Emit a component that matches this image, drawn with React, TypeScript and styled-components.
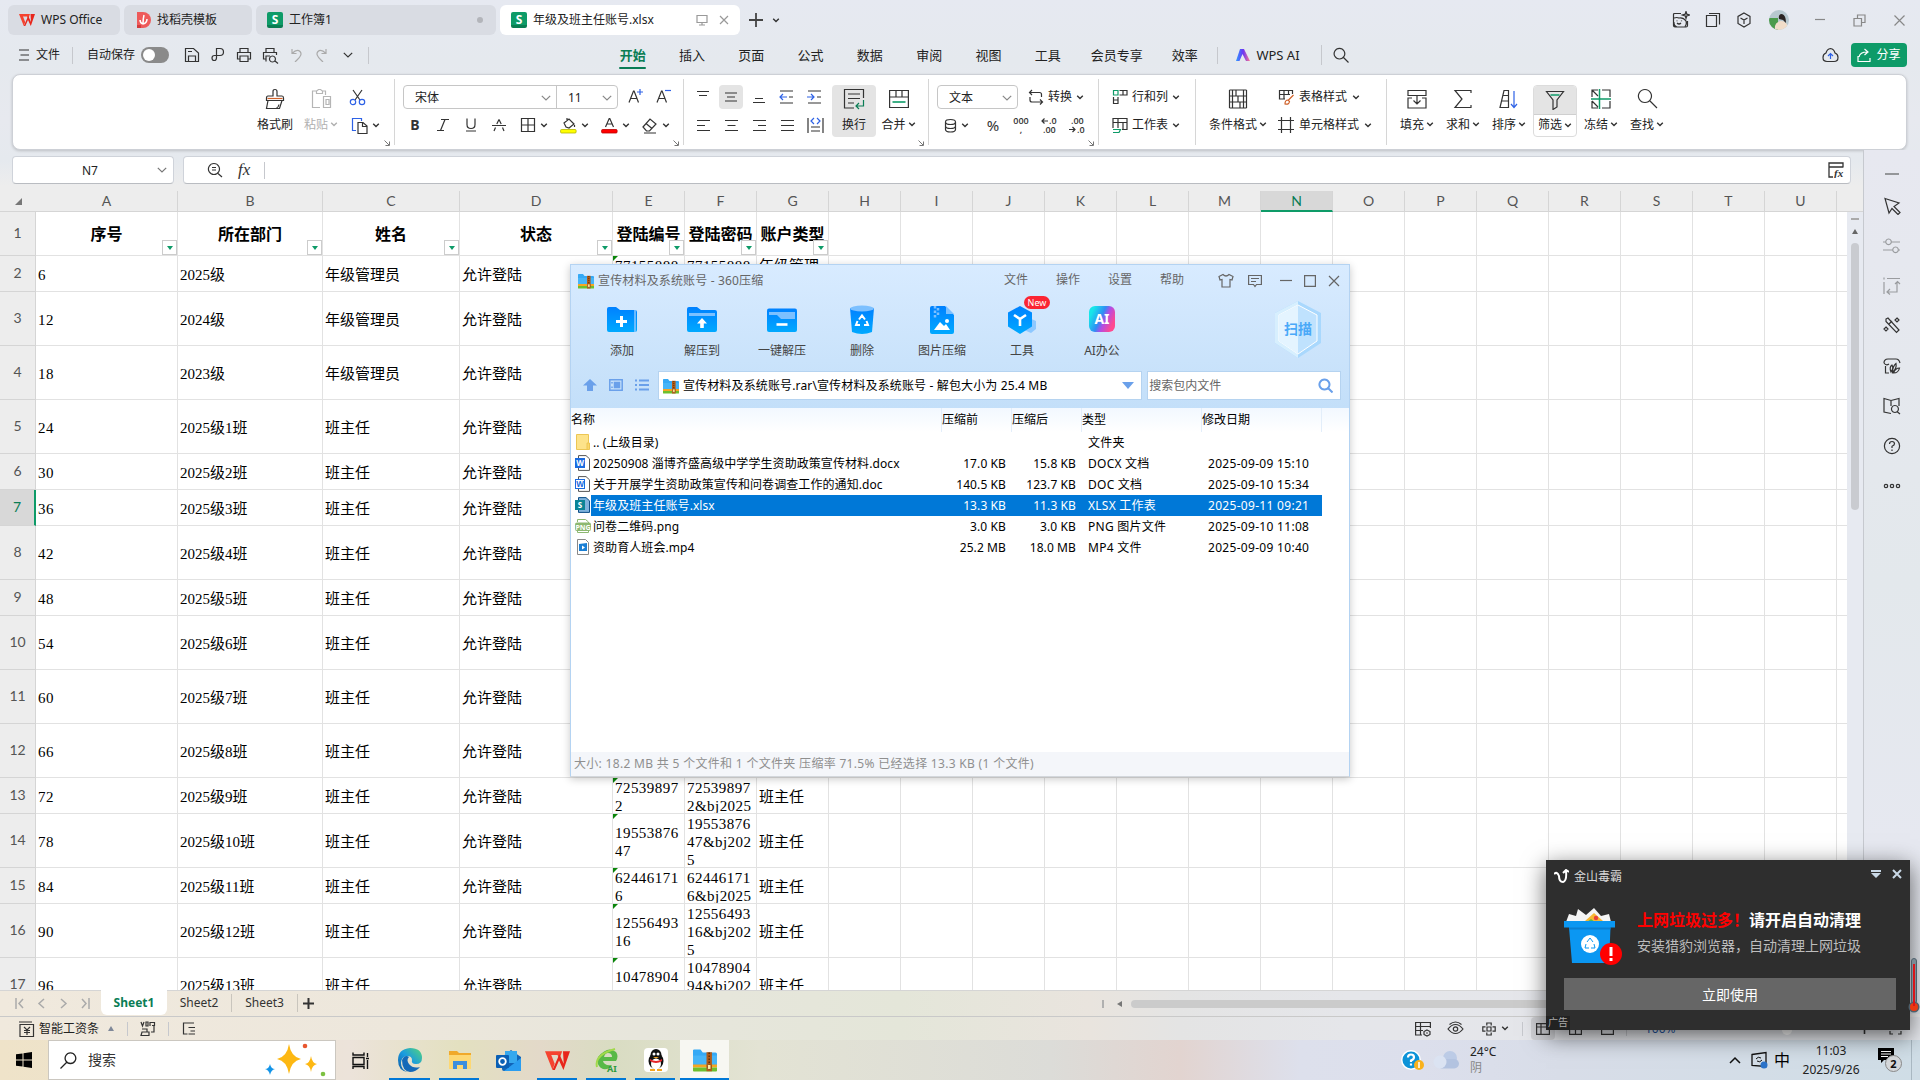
import React from "react";
import styled, { createGlobalStyle, css } from "styled-components";

const ui = `"Noto Sans", "Noto Sans CJK SC", sans-serif`;
const green = "#0e9b68";
const darkGreen = "#0a7d55";
const blue = "#2e62e6";

const Global = createGlobalStyle`
  * { box-sizing: border-box; }
  body { margin: 0; overflow: hidden; background: #e6e8ef; }
`;

const Screen = styled.div`
  position: relative;
  width: 1920px;
  height: 1080px;
  display: flex;
  flex-direction: column;
  overflow: hidden;
  font: 12px/16px ${ui};
  color: #222;
  background: linear-gradient(180deg, #e6e9f1 0, #e5e9ee 60px, #e7e9ef 120px, #e5e9ee 160px, #ededed 186px, #ededed 100%);
  svg { display: block; flex: none; }
`;

const Svg = styled.svg<{ $c?: string; $sw?: number }>`
  fill: none;
  stroke: ${(p) => p.$c || "#333"};
  stroke-width: ${(p) => p.$sw || 1.2};
`;

type GProps = { w?: number; h?: number; box?: string; c?: string; sw?: number; d?: string; children?: React.ReactNode };
const G = ({ w = 18, h, box, c, sw, d, children }: GProps) => (
  <Svg width={w} height={h || w} viewBox={box || `0 0 ${w} ${h || w}`} $c={c} $sw={sw}>
    {d && <path d={d} />}
    {children}
  </Svg>
);
const Chev = ({ c = "#333", big }: { c?: string; big?: boolean }) =>
  big ? <G w={10} h={6} c={c} sw={1.2} d="M.8 .8 5 5 9.2 .8" /> : <G w={8} h={5} c={c} sw={1.4} d="M1.2 .8 4 3.6 6.8 .8" />;

/* ---------- title bar ---------- */
const TitleBar = styled.div`
  height: 36px;
  display: flex;
  align-items: center;
  padding: 4px 0 0 8px;
  gap: 4px;
  flex: none;
`;
const Tab = styled.div<{ $w: number; $on?: boolean }>`
  width: ${(p) => p.$w}px;
  height: 30px;
  border-radius: 6px;
  background: ${(p) => (p.$on ? "#fff" : "#d9dce3")};
  display: flex;
  align-items: center;
  padding: 0 6px 0 11px;
  gap: 6px;
  color: #222;
  white-space: nowrap;
`;
const Grow = styled.div`flex: 1;`;
const Dot = styled.div`width: 6px; height: 6px; border-radius: 50%; background: #b3b5ba; margin-right: 7px;`;
const SBadge = styled.div`
  width: 16px;
  height: 16px;
  border-radius: 2px;
  background: linear-gradient(${green} 80%, #0a7d52 80%);
  color: #fff;
  font: bold 12px/15px ${ui};
  text-align: center;
`;
const NewTab = styled.div`display: flex; align-items: center; gap: 9px; margin-left: 5px;`;
const WindowTools = styled.div`
  display: flex;
  align-items: center;
`;
const ToolSlot = styled.div<{ $w: number }>`
  width: ${(p) => p.$w}px;
  display: flex;
  justify-content: center;
`;

const WLogo = ({ w = 16 }: { w?: number }) => (
  <svg width={w} height={w} viewBox="0 0 16 16">
    <path d="M0 2h11L9.200 7 8 4.500H4L6.200 10 4.800 14Z" fill="#f5432f" />
    <path d="M11.500 2H16l-4.200 12L9 8 6.300 14H4.800L9.200 4l2.800 6Z" fill="#e8261c" />
  </svg>
);

/* ---------- menu row ---------- */
const MenuRow = styled.div`
  height: 38px;
  flex: none;
  display: flex;
  align-items: center;
  padding: 0 13px 0 19px;
`;
const QuickBar = styled.div`
  width: 584px;
  display: flex;
  align-items: center;
`;
const Label = styled.span<{ $ml?: number; $c?: string; $ls?: number }>`
  margin-left: ${(p) => p.$ml || 0}px;
  color: ${(p) => p.$c || "#222"};
  letter-spacing: ${(p) => p.$ls || 0}px;
  white-space: nowrap;
`;
const VLine = styled.div<{ $l: number; $r: number; $h?: number; $c?: string }>`
  width: 1px;
  height: ${(p) => p.$h || 17}px;
  margin: 0 ${(p) => p.$r}px 0 ${(p) => p.$l}px;
  background: ${(p) => p.$c || "#c6c8cd"};
`;
const Toggle = styled.div`
  width: 28px;
  height: 16px;
  border-radius: 8px;
  margin: 0 10px 0 6px;
  background: #8a8a8a;
  padding: 2px;
  &::after { content: ""; display: block; width: 12px; height: 12px; border-radius: 50%; background: #fff; }
`;
const MenuTab = styled.div<{ $w?: number; $on?: boolean }>`
  width: ${(p) => p.$w || 59.3}px;
  height: 28px;
  display: flex;
  flex-direction: column;
  align-items: center;
  font-size: 13px;
  line-height: 25px;
  padding-top: 2px;
  color: #222;
  ${(p) => p.$on && css`color: ${darkGreen}; font-weight: bold;
    &::after { content: ""; width: 27px; height: 2px; border-radius: 1px; background: ${darkGreen}; flex: none; margin-top: -1px; }`}
`;
const MenuText = styled.span`font-size: 13px; color: #222;`;
const Share = styled.div`
  width: 56px;
  height: 24px;
  margin-left: 12px;
  border-radius: 4px;
  background: ${green};
  color: #fff;
  display: flex;
  align-items: center;
  justify-content: center;
  gap: 4px;
`;

/* ---------- ribbon ---------- */
const Ribbon = styled.div`
  margin: 0 13px 0 12px;
  height: 76px;
  flex: none;
  display: flex;
  background: #fff;
  border: 1px solid #cdd0d6;
  border-radius: 8px;
  box-shadow: 0 1px 3px rgba(0, 0, 0, 0.18);
`;
const Group = styled.div<{ $w: number; $pl: number }>`
  position: relative;
  width: ${(p) => p.$w}px;
  padding: 10px 0 0 ${(p) => p.$pl}px;
  display: flex;
  flex: none;
  &::after { content: ""; position: absolute; right: 0; top: 4px; width: 1px; height: 66px; background: #d6d6d6; }
  &:last-child::after { display: none; }
`;
const Launcher = styled.div`
  position: absolute;
  right: 5px;
  bottom: 3px;
`;
const Launch = () => (
  <Launcher><G w={6} c="#777" sw={1} d="M.5 .5 5 5M5.500 1.500v4h-4" /></Launcher>
);
const Rows = styled.div<{ $ml?: number }>`
  display: flex;
  flex-direction: column;
  gap: 4px;
  margin-left: ${(p) => p.$ml || 0}px;
`;
const Row = styled.div`
  height: 24px;
  display: flex;
  align-items: center;
`;
const Cell28 = styled.div<{ $on?: boolean; $ml?: number }>`
  width: 28px;
  height: 24px;
  margin-left: ${(p) => p.$ml || 0}px;
  display: flex;
  align-items: center;
  justify-content: center;
  ${(p) => p.$on && css`background: #e4e4e4; border-radius: 4px; width: 24px; margin: 0 2px;`}
`;
const Split = styled.div<{ $w?: number; $pl?: number; $gap?: number }>`
  width: ${(p) => p.$w || 40.3}px;
  padding-left: ${(p) => (p.$pl === undefined ? 7 : p.$pl)}px;
  display: flex;
  align-items: center;
  gap: ${(p) => p.$gap || 4}px;
`;
const Tall = styled.div<{ $w?: number; $on?: boolean; $dim?: boolean }>`
  width: ${(p) => p.$w || 46}px;
  height: 52px;
  display: flex;
  flex-direction: column;
  align-items: center;
  border-radius: 4px;
  flex: none;
  color: ${(p) => (p.$dim ? "#b0b0b0" : "#222")};
  background: ${(p) => (p.$on ? "#e4e4e4" : "transparent")};
`;
const TallIcon = styled.div`height: 27px; display: flex; align-items: center;`;
const TallText = styled.div`
  height: 25px;
  display: flex;
  align-items: center;
  gap: 2px;
  white-space: nowrap;
`;
const FilterFrame = styled.div`
  width: 44px;
  height: 52px;
  margin: 0 1px;
  flex: none;
  border: 1px solid #dcdcdc;
  border-radius: 4px;
  display: flex;
  flex-direction: column;
  align-items: center;
  overflow: hidden;
`;
const FilterTop = styled.div`
  width: 100%;
  height: 29px;
  flex: none;
  background: #e4e4e4;
  border-bottom: 1px solid #cfcfcf;
  display: flex;
  align-items: center;
  justify-content: center;
`;
const FilterText = styled(TallText)`height: 20px;`;
const Combo = styled.div<{ $w: number; $ml?: number }>`
  width: ${(p) => p.$w}px;
  height: 24px;
  margin-left: ${(p) => p.$ml || 0}px;
  border: 1px solid #c6c6c6;
  border-radius: 4px;
  display: flex;
  align-items: center;
`;
const ComboPart = styled.div<{ $w: number; $line?: boolean }>`
  width: ${(p) => p.$w}px;
  height: 22px;
  padding: 1px 5px 0 11px;
  display: flex;
  align-items: center;
  justify-content: space-between;
  border-left: ${(p) => (p.$line ? "1px solid #c6c6c6" : "0")};
`;
const Bold = styled.span`font: bold 14px/20px ${ui}; color: #333;`;
const Big = styled.span`font: 15px/20px ${ui}; color: #333;`;
const Stack = styled.div`
  font: 600 9px/9px "Open Sans", sans-serif;
  color: #333;
  text-align: center;
  white-space: pre;
`;

/* ---------- formula bar ---------- */
const FormulaRow = styled.div`
  height: 41px;
  flex: none;
  display: flex;
  gap: 9px;
  padding: 6px 0 7px 12px;
`;
const FieldBox = styled.div<{ $w: number }>`
  width: ${(p) => p.$w}px;
  height: 28px;
  background: #fff;
  border: 1px solid #cfd3da;
  border-bottom-color: #b9bcc1;
  border-radius: 4px;
  display: flex;
  align-items: center;
`;
const NameText = styled.div`flex: 1; padding: 1px 0 0 16px; text-align: center; font-size: 12px;`;
const Fx = styled.span`font: italic 17px/20px "Liberation Serif", serif; color: #333; margin-left: 15px;`;

/* ---------- sheet ---------- */
const Body = styled.div`
  height: 825px;
  flex: none;
  display: flex;
`;
const SheetArea = styled.div`
  width: 1863px;
  height: 799px;
  display: flex;
  flex-direction: column;
  overflow: hidden;
`;
const Heads = styled.div`
  height: 21px;
  flex: none;
  display: flex;
  border-bottom: 1px solid #d5d5d5;
  background: #ededed;
`;
const Corner = styled.div`width: 36px; display: flex; align-items: center; padding-left: 15px;`;
const Head = styled.div<{ $w: number; $on?: boolean }>`
  width: ${(p) => p.$w}px;
  height: 21px;
  flex: none;
  text-align: center;
  font: 14px/20px Lato, ${ui};
  color: ${(p) => (p.$on ? darkGreen : "#555")};
  background: ${(p) => (p.$on ? "#d8d8d8" : "transparent")};
  border-right: 1px solid #d5d5d5;
  border-bottom: ${(p) => (p.$on ? `2px solid ${green}` : "0")};
`;
const GridWrap = styled.div`display: flex; height: 778px;`;
const GridRows = styled.div`width: 1847px; height: 778px; overflow: hidden; background: #fff;`;
const GridRow = styled.div<{ $h: number }>`height: ${(p) => p.$h}px; display: flex;`;
const RowNo = styled.div<{ $on?: boolean }>`
  width: 36px;
  flex: none;
  display: flex;
  align-items: center;
  justify-content: center;
  padding-bottom: 2px;
  font: 14px/18px Lato, ${ui};
  color: ${(p) => (p.$on ? darkGreen : "#555")};
  background: ${(p) => (p.$on ? "#d8d8d8" : "#ededed")};
  border-bottom: 1px solid #d5d5d5;
  border-right: ${(p) => (p.$on ? `2px solid ${green}` : "1px solid #d5d5d5")};
`;
const Cell = styled.div<{ $w: number; $head?: boolean; $wide?: boolean; $last?: boolean }>`
  position: relative;
  width: ${(p) => p.$w}px;
  flex: none;
  border-right: ${(p) => (p.$last ? 0 : 1)}px solid #e2e2e2;
  border-bottom: 1px solid #e2e2e2;
  display: flex;
  align-items: center;
  justify-content: ${(p) => (p.$head ? "center" : "flex-start")};
  padding: 3px 0 0 ${(p) => (p.$head ? 0 : 2)}px;
  font-family: "Liberation Serif", "Noto Sans CJK SC", serif;
  font-size: ${(p) => (p.$head ? 16 : 15)}px;
  font-weight: ${(p) => (p.$head ? "bold" : "normal")};
  line-height: 18px;
  letter-spacing: ${(p) => (p.$wide ? 0.45 : 0)}px;
  color: #000;
  white-space: pre;
  overflow: hidden;
`;
const FilterBtn = styled.div`
  position: absolute;
  right: 0;
  bottom: 0;
  width: 15px;
  height: 15px;
  background: #fff;
  border: 1px solid #ccc;
  display: flex;
  align-items: center;
  justify-content: center;
`;
const Flag = styled.i`
  position: absolute;
  left: 0;
  top: 0;
  border-top: 5px solid #0a850a;
  border-right: 5px solid transparent;
`;
const VScroll = styled.div`
  width: 16px;
  background: #e7eaf1;
  display: flex;
  flex-direction: column;
  align-items: center;
  padding-top: 6px;
`;
const Dash = styled.div`width: 8px; height: 2px; background: #aaa;`;
const Tri = styled.i<{ $dir: "up" | "down" | "left"; $c: string; $s?: number }>`
  width: 0;
  height: 0;
  border: ${(p) => p.$s || 3}px solid transparent;
  ${(p) => p.$dir === "up" && css`border-bottom: ${(p.$s || 3) + 2}px solid ${p.$c}; border-top: 0;`}
  ${(p) => p.$dir === "down" && css`border-top: ${(p.$s || 3) + 1}px solid ${p.$c}; border-bottom: 0;`}
  ${(p) => p.$dir === "left" && css`border-right: ${(p.$s || 3) + 2}px solid ${p.$c}; border-left: 0;`}
`;
const ScrollUp = styled.div`margin: 9px 0 9px;`;
const VThumb = styled.div`width: 8px; height: 267px; border-radius: 4px; background: #c9cbd0;`;
const Side = styled.div`
  width: 57px;
  height: 864px;
  margin-top: -41px;
  border-left: 1px solid #c6c9cf;
  background: linear-gradient(#e7e8f0, #e3e8ec 50%, #e6e8f0 80%, #e3e7ec);
  display: flex;
  flex-direction: column;
  align-items: center;
  padding-top: 23px;
`;
const SideItem = styled.div`height: 40px; display: flex; align-items: center;`;
const SideMin = styled.div`width: 14px; height: 2px; background: #949699; margin-bottom: 11px;`;

/* ---------- bottom bars ---------- */
const warm = "linear-gradient(90deg, #f0e9dd 0, #ede7dc 400px, #e7e6dc 640px, #e4e6d9 900px, #e9e4de 1090px, #e4e4e4 1180px, #e5e6ea 1350px, #e4e6eb 1920px)";
const SheetBar = styled.div`
  height: 27px;
  flex: none;
  margin-top: -26px;
  width: 1863px;
  position: relative;
  background: ${warm};
  border-top: 1px solid #d5d5d5;
  border-bottom: 1px solid #c9c9c9;
  display: flex;
  align-items: center;
`;
const NavIcons = styled.div`width: 101px; padding-left: 15px; display: flex; gap: 13px;`;
const SheetTab = styled.div<{ $w: number; $on?: boolean; $line?: boolean }>`
  width: ${(p) => p.$w}px;
  height: ${(p) => (p.$on ? 25 : 18)}px;
  line-height: ${(p) => (p.$on ? 26 : 17)}px;
  margin-top: ${(p) => (p.$on ? -2 : -1)}px;
  text-align: center;
  font-size: 12px;
  color: ${(p) => (p.$on ? darkGreen : "#333")};
  font-weight: ${(p) => (p.$on ? "bold" : "normal")};
  background: ${(p) => (p.$on ? "#fff" : "transparent")};
  border-radius: 0 0 6px 6px;
  ${(p) => p.$line && css`border-right: 1px solid #c9c5bd; border-radius: 0;`}
`;
const HScroll = styled.div`margin-left: 783px; display: flex; align-items: center; gap: 13px;`;
const Tick = styled.div`width: 2px; height: 8px; background: #b0b0b0;`;
const HThumb = styled.div`width: 690px; height: 8px; border-radius: 4px; background: #cbcbcb; margin-left: -4px;`;
const StatusBar = styled.div`
  height: 23px;
  flex: none;
  background: ${warm};
  display: flex;
  align-items: center;
  padding-left: 19px;
`;
const StatusLeft = styled.div`width: 1394px; display: flex; align-items: center;`;
const StatusSlot = styled.div<{ $w: number }>`width: ${(p) => p.$w}px; display: flex; gap: 5px; align-items: center; justify-content: center;`;
const ViewOn = styled.div`width: 24px; height: 23px; border-radius: 4px; background: #cfd0d4; display: flex; align-items: center; justify-content: center;`;
const Zoom = styled.div`width: 150px; color: #2456a5; font-size: 12px; padding-left: 18px;`;
const Knob = styled.div`width: 10px; height: 10px; border-radius: 50%; background: #fff; margin: 2px 67px 0 0;`;

/* ---------- archive window ---------- */
const Archive = styled.div`
  position: absolute;
  left: 570px;
  top: 264px;
  width: 780px;
  height: 513px;
  background: #fff;
  border: 1px solid #b4d3f2;
  border-bottom-color: #d3d7dc;
  box-shadow: 0 2px 8px rgba(0, 0, 0, 0.22);
  color: #000;
  display: flex;
  flex-direction: column;
`;
const ArcTop = styled.div`
  height: 143px;
  flex: none;
  background: linear-gradient(#d8ebff, #c3dff9);
`;
const ArcTitle = styled.div`
  height: 30px;
  display: flex;
  align-items: center;
  padding: 1px 4px 0 7px;
  color: #666;
`;
const ArcMenus = styled.div`display: flex; margin-right: 19px;`;
const ArcMenu = styled.div`width: 52px; text-align: center; margin-top: -2px;`;
const ArcTools = styled.div`height: 76px; display: flex; padding-left: 11px;`;
const ArcTool = styled.div`
  position: relative;
  width: 80px;
  display: flex;
  flex-direction: column;
  align-items: center;
  padding-top: 8px;
  gap: 6px;
  color: #444;
`;
const ToolPic = styled.div`height: 34px; display: flex; align-items: center;`;
const NewTag = styled.div`
  position: absolute;
  left: 42px;
  top: 1px;
  width: 26px;
  height: 13px;
  border-radius: 7px;
  background: #fb2533;
  color: #fff;
  font: 9px/13px ${ui};
  text-align: center;
`;
const AiLogo = styled.div`
  width: 26px;
  height: 26px;
  margin-bottom: 3px;
  border-radius: 6px;
  background: linear-gradient(115deg, #17e6e9 15%, #2f8df5 45%, #b44ce4 60%, #ff4a8f 85%);
  color: #fff;
  font: bold 14px/26px ${ui};
  text-align: center;
`;
const Scan = styled.div`
  width: 60px;
  margin-left: 126px;
  padding-top: 3px;
`;
const ArcPath = styled.div`height: 36px; display: flex; align-items: center; padding: 0 8px 8px 12px;`;
const PathBox = styled.div<{ $w: number; $ml: number; $c?: string }>`
  width: ${(p) => p.$w}px;
  height: 29px;
  margin-left: ${(p) => p.$ml}px;
  background: #fff;
  border: 1px solid #b5d3f0;
  display: flex;
  align-items: center;
  padding: 1px 7px 0 ${(p) => (p.$c ? 1 : 4)}px;
  gap: 4px;
  color: ${(p) => p.$c || "#000"};
  letter-spacing: ${(p) => (p.$c ? 0 : 0.14)}px;
  white-space: nowrap;
`;
const ListHead = styled.div`
  height: 24px;
  flex: none;
  display: flex;
  line-height: 23px;
  background: linear-gradient(#f2f8ff, #fff);
`;
const HCol = styled.div<{ $w: number }>`
  width: ${(p) => p.$w}px;
  border-right: 1px solid #e3eefa;
`;
const FileRow = styled.div<{ $on?: boolean }>`
  height: 21px;
  flex: none;
  display: flex;
  align-items: center;
  padding-left: 4px;
  white-space: nowrap;
  color: ${(p) => (p.$on ? "#fff" : "#000")};
`;
const FileBand = styled.div<{ $on?: boolean }>`
  width: 731px;
  height: 21px;
  line-height: 22px;
  padding-left: 2px;
  display: flex;
  background: ${(p) => (p.$on ? "#0078d7" : "transparent")};
`;
const Col = styled.div<{ $w: number; $r?: boolean; $pl?: number; $ls?: number }>`
  width: ${(p) => p.$w}px;
  text-align: ${(p) => (p.$r ? "right" : "left")};
  padding-left: ${(p) => p.$pl || 0}px;
  letter-spacing: ${(p) => p.$ls || 0}px;
`;
const FileIcon = styled.div`width: 16px; height: 16px; margin-top: -1px;`;
const ArcStatus = styled.div`
  margin-top: auto;
  height: 24px;
  background: #f4f6fa;
  color: #8f8f8f;
  line-height: 23px;
  padding-left: 3px;
  letter-spacing: 0.31px;
`;

/* ---------- popup ---------- */
const Popup = styled.div`
  position: absolute;
  left: 1546px;
  top: 860px;
  width: 364px;
  height: 170px;
  background: #2e2e2e;
  box-shadow: 0 6px 22px rgba(0, 0, 0, 0.6);
  color: #d8d8d8;
  display: flex;
  flex-direction: column;
`;
const PopTitle = styled.div`height: 32px; display: flex; align-items: center; padding: 0 2px 0 8px; gap: 5px;`;
const PopName = styled.div`padding-top: 2px;`;
const PopTools = styled.div`display: flex; align-items: center; gap: 5px; margin-top: -5px;`;
const PopBody = styled.div`height: 86px; display: flex; padding: 14px 0 0 17px; gap: 15px;`;
const PopText = styled.div`font-size: 14px; line-height: 24px; color: #bdbdbd; padding-top: 1px; white-space: nowrap;`;
const PopHead = styled.div`font-size: 16px; line-height: 27px; font-weight: bold; color: #fff;`;
const Red = styled.span`color: #ff0000;`;
const PopButton = styled.div`
  margin-left: 18px;
  width: 332px;
  height: 32px;
  background: #666;
  color: #fff;
  font-size: 14px;
  line-height: 33px;
  text-align: center;
`;
const AdTag = styled.div`margin-top: auto; width: 24px; height: 14px; font-size: 10px; line-height: 13px; padding-left: 2px; background: #222; color: #aaa; white-space: nowrap;`;
const Thermo = styled.div`position: absolute; left: 1908px; top: 957px;`;

/* ---------- taskbar ---------- */
const Taskbar = styled.div`
  height: 40px;
  flex: none;
  display: flex;
  align-items: center;
  background: linear-gradient(90deg, #efe3c9 0, #ece2cc 200px, #ece3da 350px, #e3e0c0 460px, #e3d9c9 540px, #d9dcc2 610px, #e3e3d4 760px, #dcdcd8 1050px, #e2d4d0 1180px, #dde0ec 1300px, #dcdfec 1420px, #d8dde8 1560px, #cfdde6 1920px);
`;
const Start = styled.div`width: 48px; display: flex; justify-content: center;`;
const Search = styled.div`
  width: 288px;
  height: 40px;
  background: #fff;
  border: 1px solid #cbc7c0;
  display: flex;
  align-items: center;
  padding: 0 8px 0 11px;
  font-size: 14px;
`;
const TaskIcon = styled.div<{ $w: number; $line?: boolean; $on?: boolean }>`
  width: ${(p) => p.$w}px;
  height: 40px;
  display: flex;
  align-items: center;
  justify-content: center;
  background: ${(p) => (p.$on ? "#f7f7f2" : "transparent")};
  position: relative;
  &::after {
    content: "";
    display: ${(p) => (p.$line ? "block" : "none")};
    position: absolute;
    bottom: 0;
    left: ${(p) => (p.$on ? 0 : 4)}px;
    right: ${(p) => (p.$on ? 0 : 5)}px;
    height: 2px;
    background: #0078d7;
  }
`;
const Tray = styled.div`display: flex; align-items: center; flex: 1; padding-left: 671px;`;
const Weather = styled.div`margin-left: 2px; width: 259px; line-height: 16px; color: #222;`;
const Gray = styled.div`color: #888;`;
const Ime = styled.div`font-size: 16px; line-height: 20px; color: #000; margin-left: -3px;`;
const Clock = styled.div`width: 70px; margin-left: 6px; text-align: center; line-height: 19px; color: #222; white-space: nowrap;`;
const Notice = styled.div`position: relative; margin-left: 12px; width: 28px; height: 24px;`;
const Count = styled.div`
  position: absolute; left: 7px; top: 7px; width: 17px; height: 17px; border-radius: 50%;
  background: #d5d8db; border: 1px solid #888; font: bold 11px/15px ${ui}; text-align: center; color: #111;
`;

/* ---------- drawings ---------- */
const ZipIcon = ({ s = 16 }: { s?: number }) => (
  <svg width={s} height={s} viewBox="0 0 16 16">
    <path d="M0 1.500Q0 1 .8 1H5l1.500 2H15q1 0 1 1v8H0Z" fill="#35a9f5" />
    <path d="M0 5h16v6H0Z" fill="#57c1fb" opacity=".5" />
    <path d="M0 11h16v2H0Z" fill="#f5a623" />
    <path d="M0 13h16v2q0 .6-.6.6H.6Q0 15.600 0 15Z" fill="#6dbf2e" />
    <path d="M9 2.800h3.600v12.700H9Z" fill="#b25a17" />
    <path d="M10.800 3v8" stroke="#5e3009" strokeDasharray="1 1" />
    <rect x="9.600" y="11" width="2.400" height="3.300" rx=".6" fill="#ffe9a0" stroke="#8a4510" strokeWidth=".6" />
  </svg>
);
const Grad = () => (
  <defs>
    <linearGradient id="bl" x1="0" y1="0" x2="0" y2="1"><stop offset="0" stopColor="#0081ff" /><stop offset="1" stopColor="#00a9ff" /></linearGradient>
  </defs>
);
const AddPic = () => (
  <svg width="32" height="28" viewBox="0 0 32 28"><Grad />
    <path d="M1 3q0-2 2-2h7l4 3h15q2 0 2 2v18q0 2-2 2H3q-2 0-2-2Z" fill="url(#bl)" /><path d="M29 4v22" stroke="#8cc8ff" strokeWidth="1.500" /><path d="M15.500 10v11M10 15.500h11" stroke="#fff" strokeWidth="3" />
  </svg>
);
const ToPic = () => (
  <svg width="32" height="28" viewBox="0 0 32 28">
    <path d="M1 3q0-2 2-2h8l4 3h14q2 0 2 2v18q0 2-2 2H3q-2 0-2-2Z" fill="url(#bl)" /><path d="M3 7h26v3H3Z" fill="#7cc0ff" /><path d="M16 12l5 5.500h-3.200V22h-3.600v-4.500H11Z" fill="#fff" />
  </svg>
);
const OneKeyPic = () => (
  <svg width="32" height="28" viewBox="0 0 32 28">
    <rect x="1" y="2.500" width="30" height="23.500" rx="2" fill="url(#bl)" /><path d="M3 6h26v7H15L11 9H3Z" fill="#7cc0ff" /><path d="M10.500 18.500h11" stroke="#fff" strokeWidth="2.600" />
  </svg>
);
const BinPic = () => (
  <svg width="26" height="30" viewBox="0 0 26 30">
    <path d="M1 3h24l-2 24q-10 4-20 0Z" fill="url(#bl)" /><ellipse cx="13" cy="3.500" rx="12" ry="3" fill="#7cc0ff" />
    <path d="M10 14.500l3-4 3 4M17.500 16l1.500 4h-4M8.500 16L7 20h4" stroke="#fff" strokeWidth="2" fill="none" />
  </svg>
);
const ImgPic = () => (
  <svg width="26" height="30" viewBox="0 0 26 30">
    <path d="M3 1h13l9 9v17q0 2-2 2H3q-2 0-2-2V3q0-2 2-2Z" fill="url(#bl)" /><path d="M17 1l8 8h-8Z" fill="#7cc0ff" /><path d="M6 1v12M9 3v9" stroke="#7cc0ff" strokeWidth="2.500" strokeDasharray="2.500 2" />
    <path d="M5 25l6-8 4 4 2-2 4 6Z" fill="#fff" /><circle cx="18" cy="16" r="2" fill="#fff" />
  </svg>
);
const CubePic = () => (
  <svg width="32" height="30" viewBox="0 0 32 30">
    <path d="M23 13l7 3v8l-5 4-7-3Z" fill="#8dc8ff" /><path d="M14 1l12 6.500v14L14 29 2 21.500v-14Z" fill="url(#bl)" /><path d="M8 10l6 4 6-4M14 14v7" stroke="#fff" strokeWidth="2.600" fill="none" />
  </svg>
);
const DocIcon = ({ kind }: { kind: string }) => {
  if (kind === "up") return <svg width="16" height="16"><path d="M1.500.5h12v15h-12Z" fill="#fde38a" stroke="#ecc654" /><path d="M12 9h2.500v6.500H12Z" fill="#fbd769" stroke="#ecc654" /></svg>;
  if (kind === "png") return (
    <svg width="16" height="16"><path d="M2.500 4V1.500h8L13.500 4v1M2.500 13v1.500h11V13" stroke="#8db871" fill="none" /><rect x="0" y="4.500" width="16" height="8.500" rx="2" fill="#8db871" /><text x="8" y="11.600" fontSize="7" fontWeight="bold" fill="#fff" textAnchor="middle" fontFamily="Noto Sans">PNG</text></svg>
  );
  if (kind === "mp4") return (
    <svg width="16" height="16"><path d="M2.500.5h8l3 3v12h-11Z" fill="#fff" stroke="#888" /><path d="M4 5l8-1v8H4Z" fill="#1b7fd4" /><path d="M7 6.500l3 2-3 2Z" fill="#fff" /></svg>
  );
  const c = kind === "xls" ? "#0a8496" : "#1b6be0";
  return (
    <svg width="16" height="16">
      <path d="M3.500.6H11l3.500 3.200v11.600h-11Z" fill={kind === "xls" ? "#7fb3dd" : "#fff"} stroke={kind === "xls" ? "#0d4e86" : "#555"} />
      <rect x=".5" y="3.500" width="9" height="9" fill={kind === "doc" ? "#fff" : c} stroke={c} />
      <text x="5" y="11" fontSize="8" fontWeight="bold" fill={kind === "doc" ? c : "#fff"} textAnchor="middle" fontFamily="Noto Sans">{kind === "xls" ? "S" : "W"}</text>
    </svg>
  );
};

/* ---------- data ---------- */
const widths = [142, 145, 137, 153, ...Array(17).fill(72), 10];
const letters = "ABCDEFGHIJKLMNOPQRSTU".split("");
const titles = ["序号", "所在部门", "姓名", "状态", "登陆编号", "登陆密码", "账户类型"];
const admin = "年级管理员";
const head = "班主任";
const rows: [number, string, string, string, string?, string?, string?][] = [
  [36, "6", "2025级", admin, "77155888\n8", "77155888\n8&bj2025", "年级管理\n员"],
  [54, "12", "2024级", admin],
  [54, "18", "2023级", admin],
  [54, "24", "2025级1班", head],
  [36, "30", "2025级2班", head],
  [36, "36", "2025级3班", head],
  [54, "42", "2025级4班", head],
  [36, "48", "2025级5班", head],
  [54, "54", "2025级6班", head],
  [54, "60", "2025级7班", head],
  [54, "66", "2025级8班", head],
  [36, "72", "2025级9班", head, "72539897\n2", "72539897\n2&bj2025", head],
  [54, "78", "2025级10班", head, "19553876\n47", "19553876\n47&bj202\n5", head],
  [36, "84", "2025级11班", head, "62446171\n6", "62446171\n6&bj2025", head],
  [54, "90", "2025级12班", head, "12556493\n16", "12556493\n16&bj202\n5", head],
  [54, "96", "2025级13班", head, "10478904\n94", "10478904\n94&bj202\n5", head],
];
const files = [
  ["up", ".. (上级目录)", "", "", "文件夹", ""],
  ["docx", "20250908 淄博齐盛高级中学学生资助政策宣传材料.docx", "17.0 KB", "15.8 KB", "DOCX 文档", "2025-09-09 15:10"],
  ["doc", "关于开展学生资助政策宣传和问卷调查工作的通知.doc", "140.5 KB", "123.7 KB", "DOC 文档", "2025-09-10 15:34"],
  ["xls", "年级及班主任账号.xlsx", "13.3 KB", "11.3 KB", "XLSX 工作表", "2025-09-11 09:21"],
  ["png", "问卷二维码.png", "3.0 KB", "3.0 KB", "PNG 图片文件", "2025-09-10 11:08"],
  ["mp4", "资助育人班会.mp4", "25.2 MB", "18.0 MB", "MP4 文件", "2025-09-09 10:40"],
];

const Tallb = ({ icon, text, arrow, w, on, dim }: { icon: React.ReactNode; text: string; arrow?: boolean; w?: number; on?: boolean; dim?: boolean }) => (
  <Tall $w={w} $on={on} $dim={dim}>
    <TallIcon>{icon}</TallIcon>
    <TallText>{text}{arrow && <Chev c={dim ? "#b0b0b0" : "#333"} />}</TallText>
  </Tall>
);

const Title = () => (
  <TitleBar>
    <Tab $w={112}><WLogo />WPS Office</Tab>
    <Tab $w={128}>
      <svg width="16" height="16"><path d="M2 0h6a8 8 0 0 1 0 16H2Z" fill="#ee5a5a" /><path d="M2 13h4v3H2Z" fill="#d43c3c" /><path d="M8 12q0-5 1-9M8 12q-3-1-3-4M8 12q4-1 4-5" stroke="#fff" strokeWidth="1.500" fill="none" /></svg>
      找稻壳模板
    </Tab>
    <Tab $w={240}><SBadge>S</SBadge>工作簿1<Grow /><Dot /></Tab>
    <Tab $w={240} $on><SBadge>S</SBadge>年级及班主任账号.xlsx<Grow />
      <G w={12} c="#999" d="M1 1.500h10v7H1ZM6 8.500v2.500M3 11h6" />
      <ToolSlot $w={20}><G w={10} c="#999" d="M1 1l8 8M9 1 1 9" /></ToolSlot>
    </Tab>
    <NewTab><G w={14} sw={1.8} c="#444" d="M7 0v14M0 7h14" /><Chev /></NewTab>
    <Grow />
    <WindowTools>
      <ToolSlot $w={30}><G w={18} d="M9 2.500H2.500q-1 0-1 1v11q0 1.500 1.500 1.500h11q1.500 0 1.500-1.500V10M2 7q3-1 5 0 4-1 7 3 1 3-1 5.500M2 11q-.5 4 3 5M5 12q2 2 4 0M5 9.500v.8M9.500 9.500v.8M14 .5l.8 2.700L17.500 4l-2.700.8L14 7.500l-.8-2.700L10.500 4l2.700-.8Z" /></ToolSlot>
      <ToolSlot $w={34}><G w={16} d="M1.500 3.500h10v11h-10ZM4 1.500h10.500v11" /></ToolSlot>
      <ToolSlot $w={28}><G w={16} d="M8 1l6 3.400v7L8 15l-6-3.600v-7ZM4.500 6 8 8l3.500-2M8 8v4" /></ToolSlot>
      <ToolSlot $w={42}>
        <svg width="20" height="20"><clipPath id="av"><circle cx="10" cy="10" r="10" /></clipPath><g clipPath="url(#av)"><path d="M0 0h20v20H0Z" fill="#b7c8cf" /><path d="M0 8h9v12H0Z" fill="#4b9b4c" /><path d="M6 20q-1-8 6-9 7 0 7 9Z" fill="#f1ddc9" /><path d="M10 9q-1-5 3-5 4 1 4 9l-3-3Z" fill="#2a2422" /></g></svg>
      </ToolSlot>
      <ToolSlot $w={40}><G w={10} c="#888" d="M0 4.500h10" /></ToolSlot>
      <ToolSlot $w={39}><G w={13} c="#888" d="M1 4.500h7.500V12H1ZM4.500 4.500V1H12v7.500H8.500" /></ToolSlot>
      <ToolSlot $w={41}><G w={11} c="#888" d="M.5 .5l10 10M10.500 .5l-10 10" /></ToolSlot>
    </WindowTools>
  </TitleBar>
);

const Menu = () => (
  <MenuRow>
    <QuickBar>
      <G w={10} h={12} d="M0 1h10M1.500 6H10M0 11h10" />
      <Label $ml={7}>文件</Label>
      <VLine $l={12} $r={14} />
      <Label>自动保存</Label>
      <Toggle />
      <ToolSlot $w={26}><G w={16} d="M1.500 1.500h8l5 4.500v8.500h-13ZM4.500 14.500V9h7v5.500M4 4.500h4" /></ToolSlot>
      <ToolSlot $w={26}><G w={16} d="M6.500 11V1.500H10q3.500 0 3.500 3.500T10 8.500H4.500q-2.500 0-2.500 2.500t2.200 2.500 2.300-2.500" /></ToolSlot>
      <ToolSlot $w={26}><G w={16} d="M4 5V1.500h8V5M4 12H1.500V5.500h13V12H12M4 9h8v5.500H4Z" /></ToolSlot>
      <ToolSlot $w={26}><G w={17} d="M4 5V1.500h8V5M4 12H1.500V5.500h13V8M4 14.500V9h4M10.500 15a3 3 0 1 0-.1 0ZM13 14l3 2.500" /></ToolSlot>
      <ToolSlot $w={26}><G w={14} c="#aaa" d="M3 1v4.500h4.500M3 5.500q5-5 8-2t-3 8.500L6 14" /></ToolSlot>
      <ToolSlot $w={26}><G w={14} c="#aaa" d="M11 1v4.500H6.500M11 5.500q-5-5-8-2t3 8.500L8 14" /></ToolSlot>
      <ToolSlot $w={26}><Chev big /></ToolSlot>
      <VLine $l={7} $r={0} />
    </QuickBar>
    {["开始", "插入", "页面", "公式", "数据", "审阅", "视图", "工具"].map((t, i) => <MenuTab key={t} $on={i === 0}>{t}</MenuTab>)}
    <MenuTab $w={79}>会员专享</MenuTab>
    <MenuTab $w={57}>效率</MenuTab>
    <VLine $l={4} $r={17} />
    <svg width="16" height="14"><defs><linearGradient id="ai" x1="0" x2="1"><stop offset="0" stopColor="#2f9bff" /><stop offset=".5" stopColor="#6a35f5" /><stop offset="1" stopColor="#ff7a8d" /></linearGradient></defs><path d="M1 13 5 1h4l6 12h-4L7.500 6 4.500 13Z" fill="url(#ai)" /></svg>
    <Label $ml={5}><MenuText>WPS AI</MenuText></Label>
    <VLine $l={21} $r={11} $h={20} />
    <G w={16} d="M6.500 12a5.300 5.300 0 1 0-.1 0ZM10.500 10.500l5 5" />
    <Grow />
    <G w={17}><path d="M8.500 1.500Q12 2 13 6q3 1 3 4.500 0 4-4 4H5q-4 0-4-4Q1 7 4 6q1-4 4.500-4.500Z" /><path d="M8.500 12V6.500M6 9l2.500-2.500L11 9" stroke={blue} /></G>
    <Share><G w={15} c="#fff" d="M1 8v5.500h12V10M2 9q1-5 8-5M7.500 1 11 4 7.500 7" />分享</Share>
  </MenuRow>
);

const align = [
  ["M3 4.500h12M5 8.500h8", "M3 5h12M5 9h8M3 13h12", "M5 10.500h8M3 14.500h12"],
  ["M2 2.500h13M2 7.500h8M2 12.500h13", "M2 2.500h13M4.500 7.500h8M2 12.500h13", "M2 2.500h13M7 7.500h8M2 12.500h13"],
];

const RibbonBar = () => (
  <Ribbon>
    <Group $w={382} $pl={239}>
      <Tallb text="格式刷" icon={<G w={20} h={22}><path d="M8 8V3.500q0-2 2-2t2 2V8h5q1.500 0 1.500 2v2.500h-17V10q0-2 1.500-2ZM3 12.500l-1.500 8h13l2.500-8M11 20.500q2.500-1 3-4" /><path d="M2.500 10.500h15" stroke="#d0622a" /></G>} />
      <Tallb dim arrow text="粘贴" icon={<G w={21} c="#b5b5b5" d="M6 3H1.500v16.500H9M14.500 7V3H11M5.500 5.500V3l2-1.500h2L11.500 3v2.500ZM12.500 8.500h7v11h-7ZM15 11.500h3v5h-3Z" />} />
      <Rows>
        <Row><Split $pl={5}><G w={17}><path d="M4 1l7 10M13 1 6 11" /><circle cx="4" cy="13" r="2.700" stroke={blue} /><circle cx="13" cy="13" r="2.700" stroke={blue} /></G></Split></Row>
        <Row><Split $pl={7} $gap={4}><G w={17}><path d="M5 13.500H1.500v-12h9V4" stroke={blue} /><path d="M7 5.500h5l4 3.500v7.500H7ZM11.500 6v3.500H16" /></G><Chev /></Split></Row>
      </Rows>
      <Launch />
    </Group>
    <Group $w={289} $pl={6}>
      <Rows>
        <Row>
          <Combo $w={215} $ml={2}>
            <ComboPart $w={152}>宋体<Chev big c="#888" /></ComboPart>
            <ComboPart $w={61} $line>11<Chev big c="#888" /></ComboPart>
          </Combo>
          <Cell28 $ml={4}><G w={18}><path d="M2 14.500 6.500 3h.6l4.400 11.500M3.500 10.500h6.500" /><path d="M10 4h6M13 1v6" stroke={blue} /></G></Cell28>
          <Cell28><G w={18}><path d="M2 14.500 6.500 3h.6l4.400 11.500M3.500 10.500h6.500" /><path d="M10 2.500h6" stroke={blue} /></G></Cell28>
        </Row>
        <Row>
          <Cell28><Bold>B</Bold></Cell28>
          <Cell28><G w={16} d="M6 2.500h8M2 13.500h7M10 2.500l-4.500 11" /></Cell28>
          <Cell28><G w={16} d="M4 1.500v6q0 4 4 4t4-4v-6M3 14h10" /></Cell28>
          <Cell28><G w={16} d="M8 2.500 5.800 7M8 2.500 10.200 7M1 8.500h14M4.500 10.500 3 14M11.500 10.500 13 14" /></Cell28>
          <Split><G w={16} d="M1.500 1.500h13v13h-13ZM8 1.500v13M1.500 8h13" /><Chev /></Split>
          <Split><G w={17}><path d="M4 6 9 2l5 5-5 4-3-1ZM7 1v3M14.500 8v2" /><rect x=".6" y="12.500" width="15.500" height="3.500" rx="1" fill="#ff0" stroke="#b5b500" strokeWidth=".8" /></G><Chev /></Split>
          <Split><G w={17}><path d="M4.500 10 8.200 1.500h.6L12.500 10M6 7h5" /><rect x=".6" y="12.500" width="15.500" height="3.500" rx="1" fill="#f00" stroke="#b00" strokeWidth=".8" /></G><Chev /></Split>
          <Split><G w={17} d="M2 10 9 2l6 5-6.500 7H5.500ZM5 6.500l6 5M3 16h12" /><Chev /></Split>
        </Row>
      </Rows>
      <Launch />
    </Group>
    <Group $w={245} $pl={5}>
      <Rows>
        <Row>
          <Cell28><G w={18} h={20} d={align[0][0]} /></Cell28>
          <Cell28 $on><G w={18} d={align[0][1]} /></Cell28>
          <Cell28><G w={18} d={align[0][2]} /></Cell28>
          <Cell28><G w={16}><path d="M1 2h13M10 8h4M1 14h13" /><path d="M8 8H1M4 5 1 8l3 3" stroke={blue} /></G></Cell28>
          <Cell28><G w={16}><path d="M1 2h13M10 8h4M1 14h13" /><path d="M0 8h7M4 5l3 3-3 3" stroke={blue} /></G></Cell28>
        </Row>
        <Row>
          {align[1].map((d) => <Cell28 key={d}><G w={17} h={15} d={d} /></Cell28>)}
          <Cell28><G w={17} h={15} d="M2 2.500h13M2 7.500h13M2 12.500h13" /></Cell28>
          <Cell28><G w={17}><path d="M1 1v15M16 1v15M4 10h9M4 14h9" /><path d="M7 1 4 4l3 3M10 1l3 3-3 3" stroke={blue} /></G></Cell28>
        </Row>
      </Rows>
      <Rows $ml={3} />
      <Tallb w={44} on text="换行" icon={<G w={22}><path d="M11 20H1.500V1.500h19V10M5 6h12M5 10.500h12M5 15h6" /><path d="M20.500 12v6H13M16 15l-3 3 3 3" stroke={darkGreen} /></G>} />
      <Tallb w={45} arrow text="合并" icon={<G w={20}><path d="M.6 1.500h18.800v17H.6ZM.6 8h18.800M7 1.500V8M13 1.500V8" /><path d="M3.500 13h13" stroke={green} strokeWidth="1.600" /></G>} />
      <Launch />
    </Group>
    <Group $w={170} $pl={8}>
      <Rows>
        <Row>
          <Combo $w={81}><ComboPart $w={79}>文本<Chev big c="#888" /></ComboPart></Combo>
          <Split $w={70} $pl={10}><G w={16} d="M4 1 1.500 3.500 4 6M2 3.500h9.500q2 0 2 2V8M2 8v3q0 2 2 2h10M12 10.500l2.500 2.500-2.500 2.500" />转换<Chev /></Split>
        </Row>
        <Row>
          <Split $w={42} $pl={6} $gap={3}><G w={15} d="M2.500 4q0-2.500 5-2.500t5 2.500-5 2.500-5-2.500v7.500q0 2.500 5 2.500t5-2.500V4M2.500 8q0 2.500 5 2.500t5-2.500" /><Chev /></Split>
          <Cell28><Big>%</Big></Cell28>
          <Cell28><Stack>{"000\n,"}</Stack></Cell28>
          <Cell28><G w={16} h={18}><path d="M7 5H1M3.500 2.500 1 5l2.500 2.500" stroke="#333" /><text x="8" y="8" fontSize="9" fontWeight="600" fill="#333" stroke="none" fontFamily="Open Sans">.0</text><text x="2" y="17" fontSize="9" fontWeight="600" fill="#333" stroke="none" fontFamily="Open Sans">.00</text></G></Cell28>
          <Cell28><G w={16} h={18}><path d="M0 13.500h6M3.500 11 6 13.500 3.500 16" stroke="#333" /><text x="2" y="8" fontSize="9" fontWeight="600" fill="#333" stroke="none" fontFamily="Open Sans">.00</text><text x="8" y="17" fontSize="9" fontWeight="600" fill="#333" stroke="none" fontFamily="Open Sans">.0</text></G></Cell28>
        </Row>
      </Rows>
      <Launch />
    </Group>
    <Group $w={97} $pl={13}>
      <Rows>
        <Row><Split $w={80} $pl={0}><G w={16}><path d="M7.500 1.500h7.500V6H7.500M11 1.500V6M1.500 8v6.500H6V8M1.500 11H6" /><path d="M1.500 1.500H6V6H1.500Z" stroke={green} /></G>行和列<Chev /></Split></Row>
        <Row><Split $w={80} $pl={0}><G w={16}><path d="M1 11V1.500h14v11h-5M1 5.500h14M6 1.500V11M11 5.500v7" /><path d="M1 12.500h7.500L7 15.500H1" stroke={green} /></G>工作表<Chev /></Split></Row>
      </Rows>
    </Group>
    <Group $w={191} $pl={10}>
      <Tallb w={64} arrow text="条件格式" icon={<G w={20} h={20} d="M1.500 1v18M18.500 1v18M1.500 1h3M15.500 1h3M1.500 19h3M15.500 19h3M4.500 1v18M15.500 1v18M1.500 7h17M1.500 13h17M10 7v6M8 1v6M12 13v6M4.500 1h11M4.500 19h11" />} />
      <Rows $ml={8}>
        <Row><Split $w={100} $pl={0} $gap={5}><G w={16}><path d="M7 10H1.500V1.500h13V5M1.500 5.500H12M6 1.500V10M10.500 1.500V6" /><path d="M15.500 6l-5 5M7 15q0-4 3-4l1.500 1.500Q11 16 7 15Z" stroke="#d0622a" /></G>表格样式<Chev /></Split></Row>
        <Row><Split $w={100} $pl={0} $gap={5}><G w={16} d="M3.500 0v16M12.500 0v16M0 3.500h16M0 12.500h16" />单元格样式<Chev /></Split></Row>
      </Rows>
    </Group>
    <Group $w={300} $pl={7}>
      <Tallb arrow text="填充" icon={<G w={20} d="M1 1.500h18v5H1ZM5 9H1v10h18V9h-4M10 6.500V15M6.500 11.500 10 15l3.500-3.500" />} />
      <Tallb arrow text="求和" icon={<G w={20} d="M18 4V1.500H2l7 8.500-7 8.500h16V16" />} />
      <Tallb arrow text="排序" icon={<G w={20}><path d="M1 18.500 5 1.500h4.500v17ZM3 12h6.500M4 6.500h5.500" /><path d="M15 2v16M12 15l3 3.500 3-3.500" stroke={blue} /></G>} />
      <FilterFrame>
        <FilterTop><G w={20}><path d="M1.500 1.500h17L12 10v7l-4 2.500V10Z" /><path d="M5.500 5h9" stroke={green} strokeWidth="1.600" /></G></FilterTop>
        <FilterText>筛选<Chev /></FilterText>
      </FilterFrame>
      <Tallb arrow text="冻结" icon={<G w={20}><path d="M7 1H1v7M1 12v7h6M11 1h8v7M19 12v7h-8M1 1l6 6M1 12l6 6M13 19h-2" /><path d="M0 10h20M8.500 0v20" stroke={green} strokeWidth="1.500" /></G>} />
      <Tallb arrow text="查找" icon={<G w={21} d="M8 14.500a6.500 6.500 0 1 0-.1 0ZM12.500 12.500l7.500 7.500" />} />
    </Group>
  </Ribbon>
);

const Sheet = () => (
  <Body>
    <div>
      <SheetArea>
        <Heads>
          <Corner><svg width="7" height="7"><path d="M7 0v7H0Z" fill="#777" /></svg></Corner>
          {letters.map((l, i) => <Head key={l} $w={widths[i]} $on={l === "N"}>{l}</Head>)}
        </Heads>
        <GridWrap>
          <GridRows>
            <GridRow $h={44}>
              <RowNo>1</RowNo>
              {widths.map((w, i) => <Cell key={i} $w={w} $head $last={i === 21}>{titles[i]}{i < 7 && <FilterBtn><Tri $dir="down" $c={green} /></FilterBtn>}</Cell>)}
            </GridRow>
            {rows.map((r, n) => (
              <GridRow key={n} $h={r[0]}>
                <RowNo $on={n === 5}>{n + 2}</RowNo>
                {widths.map((w, i) => {
                  const texts = [r[1], r[2], r[3], "允许登陆", r[4], r[5], r[6]];
                  return <Cell key={i} $w={w} $wide={i === 0 || i === 4 || i === 5} $last={i === 21}>{texts[i]}{i === 4 && r[4] && <Flag />}</Cell>;
                })}
              </GridRow>
            ))}
          </GridRows>
          <VScroll><Dash /><ScrollUp><Tri $dir="up" $c="#666" as="div" /></ScrollUp><VThumb /></VScroll>
        </GridWrap>
      </SheetArea>
    </div>
    <Side>
      <SideMin />
      <SideItem><G w={18} d="M2 1.500 16 6l-5 3.500 6 6-2 2-6-6L6 16Z" /></SideItem>
      <SideItem><G w={18} c="#9a9c9f" d="M0 5h3M8 5h9M0 13h10M15 13h2M5.500 2a2.800 2.800 0 1 0 .1 0ZM12.500 10a2.800 2.800 0 1 0 .1 0Z" /></SideItem>
      <SideItem><G w={18} c="#9a9c9f" d="M1 .5v2M4 1.500h13M1 5v12M4 15h10V5M12 7l2.500-2.500L17 7M7 12l-3 3 3 2.500" /></SideItem>
      <SideItem><G w={18} d="M3 2 5 1l11 12-2.500 2.500L3 4.500ZM6 7l3-3M14 1l2 2-2 2-2-2ZM3 10l2 2-2 2-2-2Z" /></SideItem>
      <SideItem><G w={18} d="M1 6q0-4 4-4h8q3 0 4 4M1 6q2 3 5 1M2.500 9v7H6M8 15q-2-5 1-7 2 3-1 7Zm1.500.5q0-6 3.500-9 1 5-3.500 9Zm1 .5q2-5 6-5-1 5-6 5Z" /></SideItem>
      <SideItem><G w={18} d="M8 16.500 1 15V1.500l7 2 8-2V9M8 3.500V9M12 15.500a3.500 3.500 0 1 0-.1 0ZM14.500 15l2.500 2" /></SideItem>
      <SideItem><G w={18}><circle cx="9" cy="9" r="7.600" /><path d="M6.500 7q0-2.500 2.500-2.500t2.500 2.300q0 1.400-2.500 2.500V11M9 12.500V14" /></G></SideItem>
      <SideItem><G w={18} h={6}><circle cx="3" cy="3" r="1.700" /><circle cx="9" cy="3" r="1.700" /><circle cx="15" cy="3" r="1.700" /></G></SideItem>
    </Side>
  </Body>
);

const Bottom = () => (
  <>
    <SheetBar>
      <NavIcons>
        <G w={9} h={11} c="#aaa" sw={1.5} d="M1 0v11M8 1 4 5.500 8 10" />
        <G w={9} h={11} c="#aaa" sw={1.5} d="M7 1 2 5.500 7 10" />
        <G w={9} h={11} c="#aaa" sw={1.5} d="M2 1l5 4.500L2 10" />
        <G w={9} h={11} c="#aaa" sw={1.5} d="M8 0v11M1 1l4 4.500L1 10" />
      </NavIcons>
      <SheetTab $w={66} $on>Sheet1</SheetTab>
      <SheetTab $w={65} $line>Sheet2</SheetTab>
      <SheetTab $w={66} $line>Sheet3</SheetTab>
      <ToolSlot $w={21}><G w={11} sw={2} d="M5.500 0v11M0 5.500h11" /></ToolSlot>
      <HScroll><Tick /><Tri $dir="left" $c="#777" as="div" /><HThumb /></HScroll>
    </SheetBar>
    <StatusBar>
      <StatusLeft>
        <G w={16} d="M0 1h13M1 3.500h13.500v12H1ZM5 6l3 3 3-3M8 9v5M5 9.500h6M5 11.500h6" />
        <Label $ml={4}>智能工资条</Label>
        <Label $ml={9}><Tri $dir="up" $c="#7f8899" as="div" /></Label>
        <VLine $l={13} $r={12} $h={14} />
        <G w={16} d="M1 1l1.500 4L4 1M6 1v4h2V1ZM10 5V1.500h4.500v3H12M14 4v7h-3M2 8h5v3M1 14.500h8V11H2Z" />
        <VLine $l={12} $r={13} $h={14} />
        <G w={14} h={13} d="M12 1H1.500v11h4M6.500 5.500H13M8.500 9H13M6.500 12H13" />
      </StatusLeft>
      <StatusSlot $w={20}><G w={16} d="M7 14H.6V1.500h14.800V7M.6 5.500h14.800M.6 9.500H8M5.500 1.500V14M12 9l3 1.500v3L12 15l-3-1.500v-3ZM12 11.300v1.500" /></StatusSlot>
      <StatusSlot $w={44}><G w={17}><path d="M1 9q3.500-4.500 7.500-4.500T16 9q-3.500 4.500-7.500 4.500T1 9ZM2.500 4.500Q8.500-.5 14.500 4.500" /><circle cx="8.500" cy="9" r="2.200" /></G></StatusSlot>
      <StatusSlot $w={36}><G w={14} d="M4.800 3.500V1h4.400v2.500M4.800 10.500V13h4.400v-2.500M3.500 4.800H.8v4.400h2.700M10.500 4.800h2.700v4.400h-2.700M5 5h4v4H5Z" /><Chev /></StatusSlot>
      <VLine $l={9} $r={8} $h={14} />
      <ViewOn><G w={14} h={12} d="M.6 .6h12.800v10.800H.6ZM.6 4h12.800M5 .6v10.800" /></ViewOn>
      <StatusSlot $w={40}><G w={13} h={12} d="M.6 .6h11.800v10.800H.6ZM6.500 .6v10.800M.6 6h11.800" /></StatusSlot>
      <StatusSlot $w={24}><G w={13} h={12} d="M.6 .6h11.800v10.800H.6Z" /></StatusSlot>
      <VLine $l={7} $r={0} $h={14} />
      <Zoom>100%</Zoom>
      <Grow />
      <Knob />
      <G w={11} sw={1.6} d="M5.500 0v11M0 5.500h11" />
      <StatusSlot $w={50}><G w={13} h={12} d="M1 4V1h3M9 1h3v3M12 8v3H9M4 11H1V8" /></StatusSlot>
    </StatusBar>
  </>
);

const ArchiveWindow = () => (
  <Archive>
    <ArcTop>
      <ArcTitle>
        <ZipIcon /><Label $ml={4} $c="#666" $ls={0.16}>宣传材料及系统账号 - 360压缩</Label>
        <Grow />
        <ArcMenus>{["文件", "操作", "设置", "帮助"].map((t) => <ArcMenu key={t}>{t}</ArcMenu>)}</ArcMenus>
        <ToolSlot $w={18}><G w={16} c="#666" d="M5 1.500q3 3 6 0l4 2-1 3.500-2-.5V14H4V6.500L2 7 1 3.500Z" /></ToolSlot>
        <ToolSlot $w={40}><G w={14} c="#666" d="M.6 1.500h12.800v9H8.500L7 12.500 5.500 10.500H.6ZM3 4.500h8M3 7.500h5" /></ToolSlot>
        <ToolSlot $w={22}><G w={12} c="#666" d="M0 5.500h12" /></ToolSlot>
        <ToolSlot $w={26}><G w={12} c="#666" d="M.6 .6h10.800v10.800H.6Z" /></ToolSlot>
        <ToolSlot $w={22}><G w={12} c="#666" d="M1 1l10 10M11 1 1 11" /></ToolSlot>
      </ArcTitle>
      <ArcTools>
        <ArcTool><ToolPic><AddPic /></ToolPic>添加</ArcTool>
        <ArcTool><ToolPic><ToPic /></ToolPic>解压到</ArcTool>
        <ArcTool><ToolPic><OneKeyPic /></ToolPic>一键解压</ArcTool>
        <ArcTool><ToolPic><BinPic /></ToolPic>删除</ArcTool>
        <ArcTool><ToolPic><ImgPic /></ToolPic>图片压缩</ArcTool>
        <ArcTool><ToolPic><CubePic /></ToolPic>工具<NewTag>New</NewTag></ArcTool>
        <ArcTool><ToolPic><AiLogo>AI</AiLogo></ToolPic>AI办公</ArcTool>
        <Scan>
          <svg width="60" height="66" viewBox="0 0 60 66">
            <path d="M30 3l23 12v30L30 60 7 45V15Z" fill="#a9d8fd" />
            <path d="M30 3v57L7 45V15Z" fill="#d7effe" />
            <path d="M30 7l19 10v26L30 56 11 43V17Z" fill="#bfe2fe" stroke="#fff" />
            <path d="M30 7v49L11 43V17Z" fill="#e4f4ff" />
            <text x="30" y="36" fontSize="14" fontWeight="bold" fill="#4aa9f8" textAnchor="middle" fontFamily="Noto Sans CJK SC">扫描</text>
          </svg>
        </Scan>
      </ArcTools>
      <ArcPath>
        <svg width="14" height="12"><path d="M7 0l7 6.500h-4V12H4V6.500H0Z" fill="#6aa0ea" /></svg>
        <ToolSlot $w={38}><G w={14} h={12} c="#6aa0ea" sw={1.5}><path d="M.8 .8h12.400v10.400H.8Z" /><path d="M5.500 3.500h5v5h-5Z" fill="#6aa0ea" /><path d="M3 3v1.500M3 7.500V9" /></G></ToolSlot>
        <G w={14} h={12} c="#6aa0ea" sw={2} d="M4 1.500h10M4 6h10M4 10.500h10M0 1.500h2M0 6h2M0 10.500h2" />
        <PathBox $w={485} $ml={9}><ZipIcon />宣传材料及系统账号.rar\宣传材料及系统账号 - 解包大小为 25.4 MB<Grow /><Tri $dir="down" $c="#6aa0ea" $s={6} /></PathBox>
        <PathBox $w={194} $ml={5} $c="#666">搜索包内文件<Grow /><G w={15} c="#6aa0ea" sw={2} d="M6.500 11.500a5 5 0 1 0-.1 0ZM10 10l4.500 4.500" /></PathBox>
      </ArcPath>
    </ArcTop>
    <ListHead>
      <HCol $w={371}>名称</HCol><HCol $w={70}>压缩前</HCol><HCol $w={70}>压缩后</HCol><HCol $w={120}>类型</HCol><HCol $w={120}>修改日期</HCol>
    </ListHead>
    {files.map((f) => (
      <FileRow key={f[1]} $on={f[0] === "xls"}>
        <FileIcon><DocIcon kind={f[0]} /></FileIcon>
        <FileBand $on={f[0] === "xls"}>
          <Col $w={343} $ls={0.08}>{f[1]}</Col><Col $w={70} $r $ls={0.1}>{f[2]}</Col><Col $w={70} $r $ls={0.1}>{f[3]}</Col>
          <Col $w={132} $pl={12} $ls={0.25}>{f[4]}</Col><Col $w={112} $pl={-0} $ls={0.3}>{f[5]}</Col>
        </FileBand>
      </FileRow>
    ))}
    <ArcStatus>大小: 18.2 MB 共 5 个文件和 1 个文件夹 压缩率 71.5% 已经选择 13.3 KB (1 个文件)</ArcStatus>
  </Archive>
);

const AdPopup = () => (
  <Popup>
    <PopTitle>
      <G w={15} c="#fff" sw={2} d="M0 5q3-3 5 2 0 6 4 6 4-1 3-11M9 4l3-3 3 2" />
      <PopName>金山毒霸</PopName>
      <Grow />
      <PopTools>
        <svg width="10" height="8"><path d="M0 0h10v2H0ZM0 3h10L5 8Z" fill="#c9d8e6" /></svg>
        <ToolSlot $w={22}><G w={10} c="#c9d8e6" sw={2} d="M1 1l8 8M9 1 1 9" /></ToolSlot>
      </PopTools>
    </PopTitle>
    <PopBody>
      <svg width="59" height="60" viewBox="0 0 59 60">
        <path d="M3 16l3-8 7 2 2-7 8 6 8-7 7 8 8-2 2 8Z" fill="#f4f4f4" />
        <path d="M22 15l9-8 9 8Z" fill="#f7b733" /><circle cx="33" cy="12" r="2.200" fill="#e8413c" /><path d="M24 16l4-3 4 3Z" fill="#5fb946" />
        <path d="M1 15h51v6.500h-4.500L46 57H9L6 21.500H1Z" fill="#0b97f2" /><path d="M6 21.500h41.500v2H6Z" fill="#0a7fd0" />
        <circle cx="27" cy="38" r="9" fill="#fff" /><path d="M24 36l3-4 3 4M31 38l1 4h-4M23 38l-1 4h4" stroke="#0b97f2" fill="none" />
        <circle cx="48" cy="48" r="11" fill="#f00" /><path d="M48 41v9M48 52v3" stroke="#fff" strokeWidth="3" />
      </svg>
      <PopText><PopHead><Red>上网垃圾过多！</Red>请开启自动清理</PopHead>安装猎豹浏览器，自动清理上网垃圾</PopText>
    </PopBody>
    <PopButton>立即使用</PopButton>
    <AdTag>广告</AdTag>
  </Popup>
);

const Task = () => (
  <Taskbar>
    <Start><svg width="16" height="16"><path d="M0 2.300 6.500 1.400v6.100H0ZM7.500 1.200 16 0v7.500H7.500ZM0 8.500h6.500v6.100L0 13.700ZM7.500 8.500H16V16l-8.500-1.200Z" fill="#000" /></svg></Start>
    <Search>
      <G w={17} c="#222" sw={1.3} d="M10.500 11.500a5.300 5.300 0 1 0-.1 0ZM7 10l-6.500 6.500" />
      <Label $ml={11} $c="#333">搜索</Label>
      <Grow />
      <svg width="62" height="34" viewBox="0 0 62 34">
        <path d="M24 1q2 13 12 15-10 2-12 15-2-13-12-15Q22 14 24 1Z" fill="#fdb813" /><path d="M46 13q1 7 6 8-5 1-6 8-1-7-6-8 5-1 6-8Z" fill="#fdb813" />
        <path d="M5 21q1 5 5 5-4 1-5 6-1-5-5-6 4 0 5-5Z" fill="#1394e8" /><circle cx="40" cy="3" r="2.300" fill="#e8562f" /><circle cx="58" cy="31" r="2.300" fill="#7cc142" />
      </svg>
    </Search>
    <TaskIcon $w={49}><G w={17} c="#111" sw={1.4} d="M1 .5v2.500h11V.5M1 5.500h11v7H1ZM1 17v-2.500h11V17M15.500 1v4M15.500 8v9M14 6.500h3" /></TaskIcon>
    <TaskIcon $w={50} $line>
      <svg width="26" height="26" viewBox="0 0 26 26"><defs><linearGradient id="ed" x1="0" y1="1" x2="1" y2="0"><stop offset="0" stopColor="#0c59a4" /><stop offset=".5" stopColor="#1a9be0" /><stop offset="1" stopColor="#55d67a" /></linearGradient></defs><path d="M13 1q12 0 12 10 0 6-6 6-5 0-4-4 0-4-5-4-6 1-6 7 0 7 7 9-10-1-10-12T13 1Z" fill="url(#ed)" /><path d="M5 13q3-6 7-3-3 3 0 7 4 5 11 3-4 5-10 5-8-1-8-12Z" fill="#1569b8" /></svg>
    </TaskIcon>
    <TaskIcon $w={49} $line><svg width="22" height="20"><path d="M0 1h8l2 2h12v16H0Z" fill="#f0a92b" /><path d="M0 5h22v14H0Z" fill="#fdd874" /><path d="M4 19v-8h14v8h-4v-4H8v4Z" fill="#3d8fdd" /></svg></TaskIcon>
    <TaskIcon $w={49}><svg width="25" height="24" viewBox="0 0 25 24"><path d="M6 9 15 2l10 7v12q0 2-2 2H8q-2 0-2-2Z" fill="#1164b8" /><path d="M9 3h12v12H9Z" fill="#36a8ee" /><path d="M25 10v13H8Z" fill="#2a9df0" /><rect y="7" width="13" height="13" rx="1" fill="#0a5fb4" /><circle cx="6.500" cy="13.500" r="3.300" stroke="#fff" strokeWidth="1.800" fill="none" /></svg></TaskIcon>
    <TaskIcon $w={49} $line><WLogo w={25} /></TaskIcon>
    <TaskIcon $w={49} $line><svg width="24" height="26"><path d="M3 10Q13-2 21 5q3 4 0 9H8q1 5 9 4-3 5-9 4-7-3-5-12Zm6 0h8q0-4-4-4-3 0-4 4Z" fill="#58b947" /><path d="M2 20Q-1 8 20 2" stroke="#a2d94a" strokeWidth="2" fill="none" /><text x="12" y="25" fontSize="9" fontWeight="bold" fill="#2d9a3c" fontFamily="Noto Sans">AI</text></svg></TaskIcon>
    <TaskIcon $w={49} $line><svg width="24" height="26"><rect width="24" height="24" y="1" rx="4" fill="#fff" /><ellipse cx="12" cy="14" rx="7.500" ry="8" fill="#111" /><ellipse cx="12" cy="8" rx="5.500" ry="6" fill="#111" /><ellipse cx="12" cy="17" rx="5" ry="5.500" fill="#fff" /><path d="M6 12q6 4 12 0v2q-6 4-12 0Z" fill="#e5252a" /><circle cx="10" cy="7" r="1.500" fill="#fff" /><circle cx="14" cy="7" r="1.500" fill="#fff" /><path d="M9 10h6l-3 1.500ZM6 22h5v2H6ZM13 22h5v2h-5Z" fill="#f5a51d" /></svg></TaskIcon>
    <TaskIcon $w={49} $line $on><ZipIcon s={24} /></TaskIcon>
    <Tray>
      <svg width="24" height="22"><circle cx="11" cy="11" r="10" fill="#fff" /><circle cx="11" cy="11" r="8.500" fill="#0d93d8" /><path d="M8 8.500q0-3 3-3t3 2.700q0 2-3 3.300V13M11 14.500v2" stroke="#fff" strokeWidth="2.200" fill="none" /><circle cx="19" cy="16" r="5" fill="#f9b21d" /><path d="M19 13v6" stroke="#fff" strokeWidth="1.500" /></svg>
      <ToolSlot $w={44}><svg width="26" height="20"><circle cx="17" cy="8" r="7" fill="#bccbe6" /><rect x="4" y="9" width="22" height="9.500" rx="4.700" fill="#b3c3e0" /><circle cx="7" cy="12" r="6.500" fill="#dbe3f2" /></svg></ToolSlot>
      <Weather>24°C<Gray>阴</Gray></Weather>
      <G w={12} h={8} sw={1.5} c="#111" d="M1 7l5-5 5 5" />
      <ToolSlot $w={36}><svg width="18" height="18"><path d="M2 3.500 16 1.500v14L2 14.500Z" fill="none" stroke="#111" strokeWidth="1.300" /><path d="M6 8q2-3 5-1M12 9q-2 3-5 1" stroke="#111" fill="none" /><circle cx="14" cy="14" r="3.500" fill="#2b73c9" /></svg></ToolSlot>
      <Ime>中</Ime>
      <Clock>11:03<br />2025/9/26</Clock>
      <Notice><svg width="16" height="16"><path d="M0 0h16v12H6l-3 3v-3H0Z" fill="#000" /><path d="M3 3.500h10M3 6h10M3 8.500h7" stroke="#fff" /></svg><Count>2</Count></Notice>
      <VLine $l={5} $r={4} $h={40} $c="#a9b8c2" />
    </Tray>
  </Taskbar>
);

export default function App() {
  return (
    <Screen>
      <Global />
      <Title />
      <Menu />
      <RibbonBar />
      <FormulaRow>
        <FieldBox $w={162}><NameText>N7</NameText><ToolSlot $w={22}><Chev big c="#777" /></ToolSlot></FieldBox>
        <FieldBox $w={1668}>
          <VLine $l={22} $r={0} $c="#fff" />
          <G w={16} d="M7 12.500a5.500 5.500 0 1 0-.1 0ZM11 11.500l4 3.500M5 5.500h4M5 8h4" />
          <Fx>fx</Fx>
          <VLine $l={14} $r={0} />
          <Grow />
          <ToolSlot $w={28}><svg width="17" height="16"><path d="M5 15H1V1h14v4.500M1 5h14" stroke="#333" strokeWidth="1.300" fill="none" /><text x="6" y="14.500" fontSize="11" fontStyle="italic" fontWeight="bold" fill="#333" fontFamily="Liberation Serif">fx</text></svg></ToolSlot>
        </FieldBox>
      </FormulaRow>
      <Sheet />
      <Bottom />
      <Task />
      <ArchiveWindow />
      <AdPopup />
      <Thermo>
        <svg width="12" height="57"><rect x="3.500" y="1.500" width="5" height="45" rx="2.500" fill="#7b8a94" stroke="#4d5f6b" /><circle cx="6" cy="50" r="5.500" fill="#4d5f6b" /><circle cx="6" cy="50" r="4" fill="#ea3a12" /><path d="M6 7v42" stroke="#d9161a" strokeWidth="2" /></svg>
      </Thermo>
    </Screen>
  );
}
